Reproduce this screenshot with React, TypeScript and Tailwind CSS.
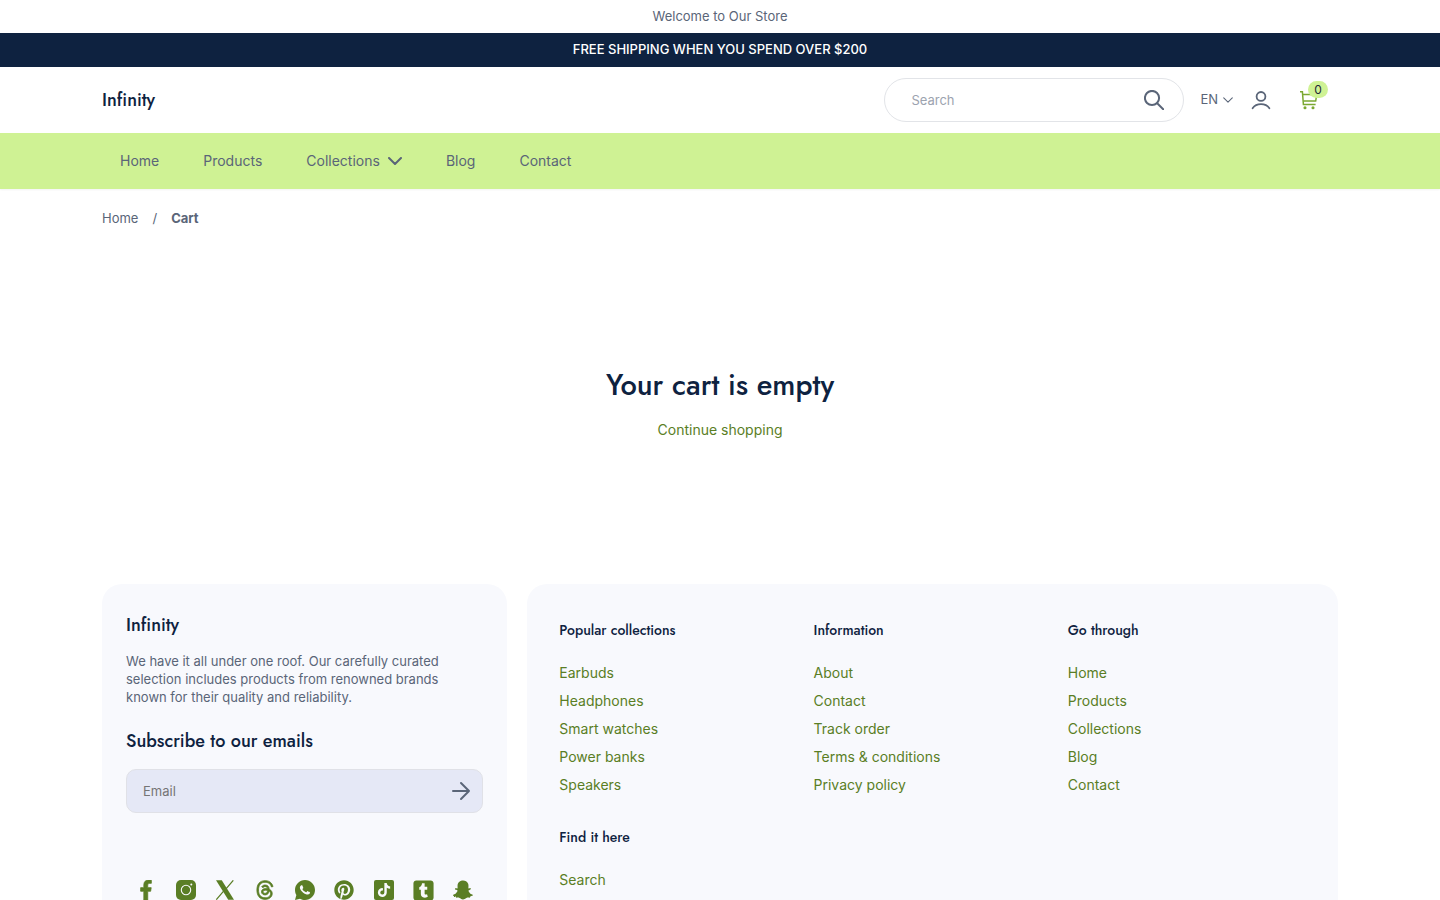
import React, { useState } from "react";
import { FaFacebookF, FaPinterest, FaSnapchatGhost, FaTiktok } from "react-icons/fa";
import { FaThreads, FaSquareTumblr } from "react-icons/fa6";
import { RiWhatsappFill } from "react-icons/ri";

const headingFont = "font-['Jost','Lato',sans-serif]";

const navLinks = [
  { label: "Home" },
  { label: "Products" },
  { label: "Collections", hasMenu: true },
  { label: "Blog" },
  { label: "Contact" },
];

const footerColumns = [
  {
    title: "Popular collections",
    links: ["Earbuds", "Headphones", "Smart watches", "Power banks", "Speakers"],
  },
  {
    title: "Information",
    links: ["About", "Contact", "Track order", "Terms & conditions", "Privacy policy"],
  },
  {
    title: "Go through",
    links: ["Home", "Products", "Collections", "Blog", "Contact"],
  },
  { title: "Find it here", links: ["Search"] },
];

function InstagramIcon() {
  return (
    <svg viewBox="0 0 20 20" className="w-5 h-5" fill="none">
      <rect width="20" height="20" rx="5" fill="currentColor" />
      <circle cx="10" cy="10" r="4.7" stroke="#f8f9fd" strokeWidth="1.1" />
      <circle cx="15.3" cy="4.6" r="1" fill="#f8f9fd" />
    </svg>
  );
}

function XIcon() {
  return (
    <svg viewBox="0 0 20 20" className="w-5 h-5" fill="none">
      <path d="M1 0.300h5.800l12.200 19.400h-5.800z" fill="currentColor" />
      <path d="M18.300 0.300l-7.300 8.500M8.600 11.200l-7.300 8.500" stroke="currentColor" strokeWidth="1.2" />
    </svg>
  );
}

function TiktokIcon() {
  return (
    <span className="flex w-5 h-5 items-center justify-center rounded-xs bg-[#5a7e25]">
      <FaTiktok className="w-3.5 h-3.5 text-[#f8f9fd]" />
    </span>
  );
}

const socials = [
  { name: "Facebook", icon: <FaFacebookF className="w-5 h-5 stroke-current stroke-20" /> },
  { name: "Instagram", icon: <InstagramIcon /> },
  { name: "X", icon: <XIcon /> },
  { name: "Threads", icon: <FaThreads className="w-5 h-5 stroke-current stroke-20" /> },
  { name: "WhatsApp", icon: <RiWhatsappFill className="w-6 h-6" /> },
  { name: "Pinterest", icon: <FaPinterest className="w-5 h-5" /> },
  { name: "TikTok", icon: <TiktokIcon /> },
  { name: "Tumblr", icon: <FaSquareTumblr className="w-[23px] h-[23px]" /> },
  { name: "Snapchat", icon: <FaSnapchatGhost className="w-5 h-5" /> },
];

function ChevronDown({ className }: { className: string }) {
  return (
    <svg viewBox="0 0 14 8" className={className} fill="none" stroke="currentColor">
      <path d="M1 1l6 6 6-6" strokeLinecap="round" strokeLinejoin="round" />
    </svg>
  );
}

function CartIcon() {
  return (
    <svg viewBox="0 0 20 20" className="w-5 h-5" fill="none" stroke="currentColor" strokeWidth="1.5">
      <path d="M1 1.800h2.400l1 12.700h12.200" />
      <path d="M3.700 4.500h14l-1 6.500H4.300" />
      <circle cx="6" cy="17.800" r="0.800" fill="currentColor" />
      <circle cx="14" cy="17.800" r="0.800" fill="currentColor" />
    </svg>
  );
}

export default function App() {
  const [search, setSearch] = useState("");
  const [email, setEmail] = useState("");

  return (
    <div className="min-h-screen bg-white font-['Inter',sans-serif] text-[#5a6578]">
      {/* Announcements */}
      <p className="pt-2 pb-[9px] text-center text-[13px] leading-4">Welcome to Our Store</p>
      <p className="bg-[#0e2240] pt-2 pb-2.5 text-center text-[13px] leading-4 font-medium text-white">
        FREE SHIPPING WHEN YOU SPEND OVER $200
      </p>

      {/* Header */}
      <header>
        <div className="mx-auto flex h-[66px] max-w-[1300px] items-center px-8">
          <a href="#" className={`${headingFont} text-lg font-medium text-[#0e2240]`}>
            Infinity
          </a>
          <form className="relative ml-auto w-[300px]" onSubmit={(e) => e.preventDefault()}>
            <input
              type="search"
              aria-label="Search"
              placeholder="Search"
              value={search}
              onChange={(e) => setSearch(e.target.value)}
              className="h-11 w-full rounded-full border border-[#e2e4e8] pl-[26px] pr-14 text-[13px] placeholder:text-[#9ca3af]"
            />
            <button type="submit" aria-label="Submit search" className="absolute right-5 top-3">
              <svg viewBox="0 0 20 20" className="w-5 h-5" fill="none" stroke="currentColor" strokeWidth="2">
                <circle cx="8" cy="8" r="7.100" />
                <path d="M13.200 13.200l6 6" strokeLinecap="round" />
              </svg>
            </button>
          </form>
          <button type="button" className="ml-4 flex items-center gap-[5px] text-[13px]">
            EN
            <ChevronDown className="w-2.5 h-2 stroke-[1.5]" />
          </button>
          <a href="#" aria-label="Account" className="ml-[18px]">
            <svg viewBox="0 0 20 20" className="w-5 h-5" fill="none" stroke="currentColor" strokeWidth="1.8">
              <circle cx="10" cy="6.400" r="4.400" />
              <path d="M1.600 18.200c2-2.800 5-4 8.400-4s6.400 1.200 8.400 4" strokeLinecap="round" />
            </svg>
          </a>
          <a href="#" aria-label="Cart" className="relative ml-7 mr-[19px] text-[#7ba832]">
            <CartIcon />
            <span className="absolute -top-[9px] left-[9px] flex h-[17px] w-5 items-center justify-center rounded-full bg-[#cff294] text-xs text-[#1f2937]">
              0
            </span>
          </a>
        </div>
        <nav className="bg-[#cff294] shadow-xs">
          <ul className="mx-auto flex h-14 max-w-[1300px] items-center gap-11 px-[50px] text-sm">
            {navLinks.map((link) => (
              <li key={link.label}>
                <a href="#" className="flex items-center gap-2">
                  {link.label}
                  {link.hasMenu && <ChevronDown className="w-3.5 h-2 stroke-2" />}
                </a>
              </li>
            ))}
          </ul>
        </nav>
      </header>

      <main className="mx-auto max-w-[1300px] px-8">
        <nav aria-label="Breadcrumb" className="flex gap-3.5 pt-5 text-[13px] leading-[18px]">
          <a href="#">Home</a>
          <span>/</span>
          <span className="font-bold">Cart</span>
        </nav>

        <section className="flex flex-col items-center pt-[138px] pb-36 text-center">
          <h1 className={`${headingFont} text-[29px] leading-10 font-medium text-[#0e2240]`}>
            Your cart is empty
          </h1>
          <a href="#" className="mt-[15px] text-sm text-[#5a7e25]">
            Continue shopping
          </a>
        </section>
      </main>

      {/* Footer */}
      <footer className="mx-auto grid max-w-[1300px] gap-5 px-8 lg:grid-cols-[1fr_2fr]">
        <div className="rounded-t-[20px] bg-[#f8f9fd] px-6 pt-[29px]">
          <a href="#" className={`${headingFont} block text-lg leading-6 font-medium text-[#0e2240]`}>
            Infinity
          </a>
          <p className="mt-[15px] max-w-[320px] text-[13px] leading-[18px]">
            We have it all under one roof. Our carefully curated selection includes products from
            renowned brands known for their quality and reliability.
          </p>
          <h2 className={`${headingFont} mt-[23px] text-lg leading-6 font-medium text-[#0e2240]`}>
            Subscribe to our emails
          </h2>
          <form className="relative mt-4" onSubmit={(e) => e.preventDefault()}>
            <input
              type="email"
              aria-label="Email"
              placeholder="Email"
              value={email}
              onChange={(e) => setEmail(e.target.value)}
              className="h-11 w-full rounded-[10px] border border-[#e0e1e7] bg-[#e5e8f6] px-4 pr-12 text-[13px] placeholder:text-[#757575]"
            />
            <button type="submit" aria-label="Subscribe" className="absolute right-3 top-3">
              <svg viewBox="0 0 20 20" className="w-5 h-5" fill="none" stroke="currentColor" strokeWidth="2">
                <path d="M2 10h16M10 2l8 8-8 8" strokeLinecap="round" strokeLinejoin="round" />
              </svg>
            </button>
          </form>
          <ul className="mt-[65px] flex justify-between px-2 text-[#5a7e25]">
            {socials.map((social) => (
              <li key={social.name}>
                <a href="#" aria-label={social.name} className="flex h-6 w-6 items-center justify-center">
                  {social.icon}
                </a>
              </li>
            ))}
          </ul>
        </div>

        <div className="grid grid-cols-3 content-start gap-x-4 gap-y-7 rounded-t-[20px] bg-[#f8f9fd] px-8 pt-9 pb-4">
          {footerColumns.map((column) => (
            <div key={column.title}>
              <h2 className={`${headingFont} text-sm leading-5 font-medium text-[#0e2240]`}>
                {column.title}
              </h2>
              <ul className="mt-[19px] text-sm leading-7 text-[#5a7e25]">
                {column.links.map((link) => (
                  <li key={link} className="leading-7">
                    <a href="#">{link}</a>
                  </li>
                ))}
              </ul>
            </div>
          ))}
        </div>
      </footer>
    </div>
  );
}
